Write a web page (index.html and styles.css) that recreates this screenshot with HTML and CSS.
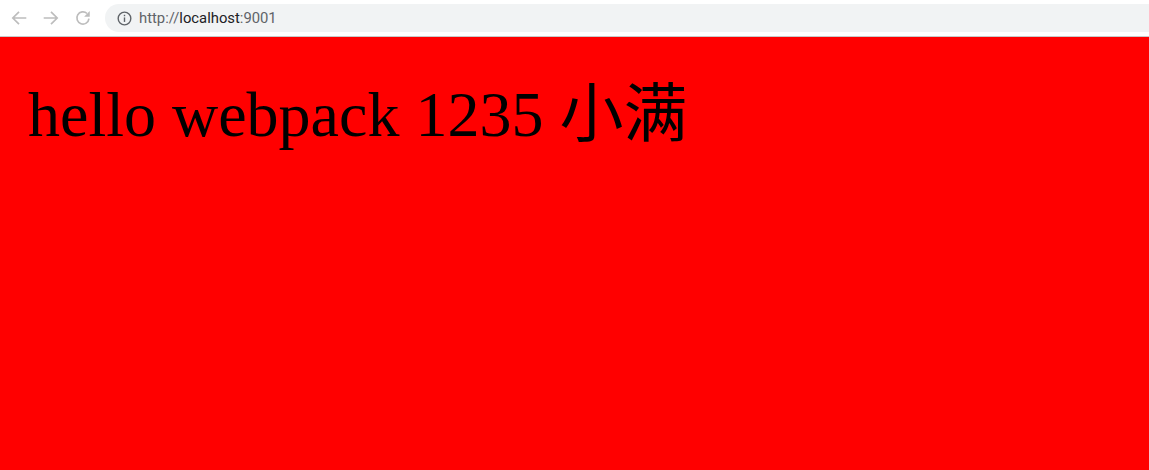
FILE: index.html
```html
<!DOCTYPE html>
<html>
<head>
<meta charset="utf-8">
<link rel="stylesheet" href="styles.css">
</head>
<body>
<div class="toolbar">
  <div class="navs">
    <svg class="nav" width="18" height="18" viewBox="0 0 16 16"><path d="M14.5 8H2.5M8 2.5L2.5 8 8 13.5" fill="none" stroke="#bdbdbd" stroke-width="1.5"/></svg>
    <svg class="nav" width="18" height="18" viewBox="0 0 16 16"><path d="M1.5 8h12M8 2.5L13.5 8 8 13.5" fill="none" stroke="#bdbdbd" stroke-width="1.5"/></svg>
    <svg class="nav" width="18" height="18" viewBox="0 0 16 16"><path d="M13.3 8.6A5.4 5.4 0 1 1 11.6 4" fill="none" stroke="#bdbdbd" stroke-width="1.5"/><path d="M14 1.8v5H9z" fill="#bdbdbd"/></svg>
  </div>
  <div class="omnibox">
    <svg class="info" width="15" height="15" viewBox="0 0 14 14"><circle cx="7" cy="7" r="5.9" fill="none" stroke="#5f6368" stroke-width="1.3"/><rect x="6.35" y="6" width="1.3" height="4.2" fill="#5f6368"/><rect x="6.35" y="3.5" width="1.3" height="1.4" fill="#5f6368"/></svg>
    <span class="url"><span class="dim">http://</span>localhost<span class="dim">:9001</span></span>
  </div>
</div>
<div class="page">
  <h1 class="title">hello webpack 1235 小满</h1>
</div>
</body>
</html>
```
FILE: styles.css
```css
html, body {
  margin: 0;
  padding: 0;
  height: 100%;
}
body {
  display: flex;
  flex-direction: column;
  background: #ff0000;
  overflow: hidden;
}
.toolbar {
  height: 36px;
  background: #ffffff;
  border-bottom: 1px solid #c9c9c9;
  display: flex;
  align-items: center;
  flex-shrink: 0;
}
.navs {
  display: flex;
  gap: 14px;
  padding-left: 10px;
  width: 95px;
}
.nav {
  display: block;
}
.omnibox {
  flex: 1;
  height: 28px;
  background: #f1f3f4;
  border-radius: 14px 0 0 14px;
  display: flex;
  align-items: center;
  padding-left: 12px;
  gap: 7px;
}
.info {
  display: block;
}
.url {
  font-family: "Roboto", "Liberation Sans", sans-serif;
  font-size: 14.8px;
  color: #202124;
}
.dim {
  color: #5f6368;
}
.page {
  flex: 1;
  padding: 41px 0 0 28px;
}
.title {
  margin: 0;
  font-family: "Liberation Serif", "Noto Sans CJK SC", serif;
  font-weight: normal;
  font-size: 64px;
  line-height: 1.15;
  color: #000;
}
```
